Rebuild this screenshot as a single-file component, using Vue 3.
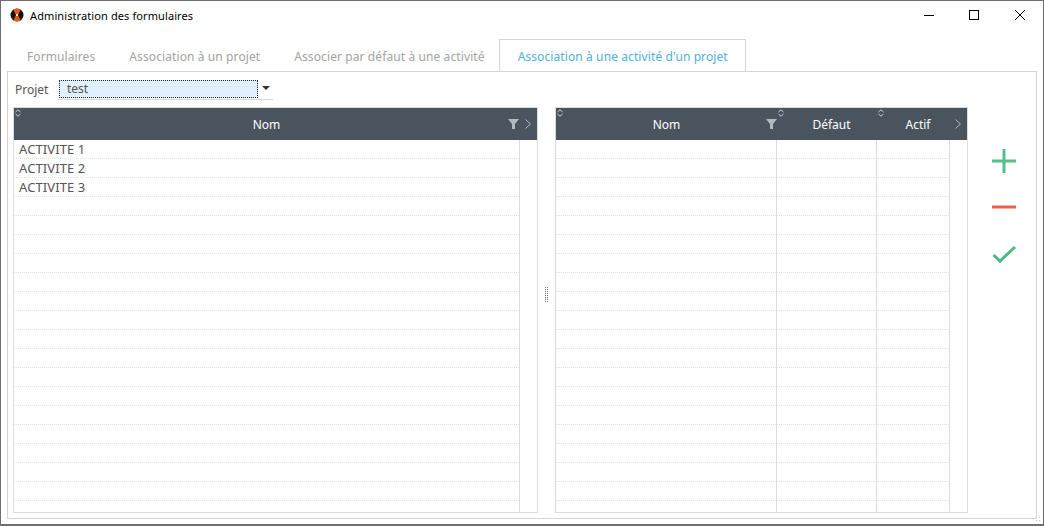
<script setup>
const tabs = [
  { label: 'Formulaires' },
  { label: 'Association à un projet' },
  { label: 'Associer par défaut à une activité' },
  { label: "Association à une activité d'un projet", active: true },
]
const activities = ['ACTIVITE 1', 'ACTIVITE 2', 'ACTIVITE 3']
const rows = Array.from({ length: 19 }, (_, i) => i)
const grip = Array.from({ length: 16 }, (_, i) => i)
</script>

<template>
  <div class="window">
    <header class="titlebar">
      <svg class="logo" width="14" height="14" viewBox="0 0 14 14">
        <circle cx="7" cy="7" r="6.5" fill="#111" />
        <path d="M3 1h8L8 7l3 6H3l3-6z" fill="#e8590c" />
        <path d="M6 6.2h2V8H6z" fill="#fff" />
      </svg>
      <span class="title">Administration des formulaires</span>
      <div class="controls">
        <svg width="12" height="12" viewBox="0 0 12 12"><path d="M2 6.5h10" stroke="#000" fill="none" /></svg>
        <svg width="12" height="12" viewBox="0 0 12 12"><rect x="1.5" y="1.5" width="9" height="9" stroke="#000" fill="none" /></svg>
        <svg width="12" height="12" viewBox="0 0 12 12"><path d="M1 1l10 10M11 1L1 11" stroke="#000" fill="none" /></svg>
      </div>
    </header>

    <nav class="tabs">
      <div v-for="t in tabs" :key="t.label" class="tab" :class="{ active: t.active }">{{ t.label }}</div>
    </nav>

    <main class="panel">
      <div class="project">
        <span class="project-label">Projet</span>
        <div class="combo">
          <div class="combo-value">test</div>
          <span class="combo-arrow"></span>
        </div>
      </div>

      <div class="content">
        <section class="table left-table">
          <div class="thead">
            <div class="th">
              <svg class="sort" width="6" height="8" viewBox="0 0 6 8"><path d="M.5 3L3 .8 5.5 3M.5 5L3 7.2 5.5 5" stroke="#ccd2d8" fill="none" /></svg>
              <span>Nom</span>
              <svg class="filter" width="11" height="10" viewBox="0 0 11 10"><path d="M0 0h11L7 5v5H4V5z" fill="#b4b9be" /></svg>
            </div>
            <svg class="chev" width="6" height="10" viewBox="0 0 6 10"><path d="M.5.5L5.5 5 .5 9.5" stroke="#b4b9be" fill="none" /></svg>
          </div>
          <div class="tbody">
            <div class="col-main">
              <div v-for="i in rows" :key="i" class="row">{{ activities[i] }}</div>
            </div>
          </div>
        </section>

        <div class="splitter">
          <div class="grip"><i v-for="g in grip" :key="g"></i></div>
        </div>

        <section class="table right-table">
          <div class="thead">
            <div class="th c-nom">
              <svg class="sort" width="6" height="8" viewBox="0 0 6 8"><path d="M.5 3L3 .8 5.5 3M.5 5L3 7.2 5.5 5" stroke="#ccd2d8" fill="none" /></svg>
              <span>Nom</span>
              <svg class="filter" width="11" height="10" viewBox="0 0 11 10"><path d="M0 0h11L7 5v5H4V5z" fill="#b4b9be" /></svg>
            </div>
            <div class="th c-def">
              <svg class="sort" width="6" height="8" viewBox="0 0 6 8"><path d="M.5 3L3 .8 5.5 3M.5 5L3 7.2 5.5 5" stroke="#ccd2d8" fill="none" /></svg>
              <span>Défaut</span>
            </div>
            <div class="th c-act">
              <svg class="sort" width="6" height="8" viewBox="0 0 6 8"><path d="M.5 3L3 .8 5.5 3M.5 5L3 7.2 5.5 5" stroke="#ccd2d8" fill="none" /></svg>
              <span>Actif</span>
            </div>
            <svg class="chev" width="6" height="10" viewBox="0 0 6 10"><path d="M.5.5L5.5 5 .5 9.5" stroke="#b4b9be" fill="none" /></svg>
          </div>
          <div class="tbody">
            <div class="col-cell c-nom"><div v-for="i in rows" :key="i" class="row"></div></div>
            <div class="col-cell c-def"><div v-for="i in rows" :key="i" class="row"></div></div>
            <div class="col-cell c-act"><div v-for="i in rows" :key="i" class="row"></div></div>
          </div>
        </section>

        <aside class="actions">
          <svg width="24" height="24" viewBox="0 0 24 24"><path d="M12 0v24M0 12h24" stroke="#52c08a" stroke-width="3" fill="none" /></svg>
          <svg width="24" height="4" viewBox="0 0 24 4"><path d="M0 2h24" stroke="#ee5f50" stroke-width="3" fill="none" /></svg>
          <svg width="24" height="18" viewBox="0 0 24 18"><path d="M1.5 10l6.5 6L23 2" stroke="#4cb886" stroke-width="3" fill="none" /></svg>
        </aside>
      </div>
    </main>

    <div class="resize"></div>
  </div>
</template>

<style>
html, body { margin: 0; background: #fff; }
</style>

<style scoped>
.window {
  position: relative;
  box-sizing: border-box;
  width: 1044px;
  height: 526px;
  border: 1px solid #6f6f6f;
  border-bottom-width: 2px;
  background: #fff;
  display: flex;
  flex-direction: column;
  font-family: "Noto Sans", sans-serif;
  font-size: 12px;
  color: #555;
  overflow: hidden;
}
.titlebar {
  height: 38px;
  flex: none;
  display: flex;
  align-items: center;
  padding-left: 9px;
  padding-bottom: 10px;
  box-sizing: border-box;
}
.logo { margin-right: 6px; }
.title { color: #000; font-size: 11px; letter-spacing: 0.1px; }
.controls {
  margin-left: auto;
  display: flex;
  gap: 34px;
  padding-right: 17px;
}
.tabs {
  display: flex;
  height: 32px;
  flex: none;
  padding-left: 9px;
}
.tab {
  padding: 0 17px;
  line-height: 36px;
  color: #a3a3a3;
  white-space: nowrap;
  letter-spacing: 0.1px;
}
.tab.active {
  color: #4fb0e0;
  line-height: 34px;
  border: 1px solid #d4d4d4;
  border-bottom: 0;
  height: 32px;
  box-sizing: border-box;
  padding: 0 17px 0 18px;
  margin-left: -3px;
}
.panel {
  margin: 0 6px 5px 6px;
  flex: 1;
  min-height: 0;
  border: 1px solid #d4d4d4;
  padding: 8px 0 5px 5px;
  display: flex;
  flex-direction: column;
}
.project {
  display: flex;
  height: 27px;
  flex: none;
  padding-left: 2px;
}
.project-label { width: 43px; line-height: 20px; }
.combo {
  width: 215px;
  height: 19px;
  border-bottom: 1px solid #d8d8d8;
  position: relative;
}
.combo-value {
  box-sizing: border-box;
  width: 199px;
  height: 18px;
  margin-left: 1px;
  background: #e0f0fe;
  border: 1px dotted #222;
  padding-left: 7px;
  line-height: 15px;
}
.combo-arrow {
  position: absolute;
  left: 204px;
  top: 6px;
  border: 4px solid transparent;
  border-top-color: #333;
  border-bottom: 0;
}
.content {
  display: flex;
  flex: 1;
  min-height: 0;
}
.table {
  box-sizing: border-box;
  border: 1px solid #dcdcdc;
  display: flex;
  flex-direction: column;
  flex: none;
}
.left-table { width: 525px; }
.right-table { width: 413px; }
.thead {
  height: 32px;
  flex: none;
  background: #4a545e;
  color: #fff;
  display: flex;
  position: relative;
}
.th {
  position: relative;
  display: flex;
  align-items: center;
  justify-content: center;
  flex: 1;
}
.sort { position: absolute; left: 1px; top: 1px; }
.filter { position: absolute; right: 0; top: 11px; }
.chev { position: absolute; right: 6px; top: 11px; }
.left-table .th { flex: none; width: 505px; }
.tbody {
  flex: 1;
  display: flex;
  min-height: 0;
}
.col-main {
  width: 505px;
  border-right: 1px solid #dcdcdc;
}
.row {
  box-sizing: border-box;
  height: 19px;
  border-bottom: 1px dotted #e2e2e2;
  padding-left: 5px;
  line-height: 18px;
  font-size: 13px;
  letter-spacing: 0.1px;
}
.th.c-nom, .col-cell.c-nom { flex: none; width: 221px; }
.th.c-def, .col-cell.c-def { flex: none; width: 100px; padding-left: 9px; box-sizing: border-box; }
.th.c-act, .col-cell.c-act { flex: none; width: 73px; padding-left: 9px; box-sizing: border-box; }
.col-cell { box-sizing: border-box; border-right: 1px solid #dcdcdc; }
.col-cell.c-def, .col-cell.c-act { padding-left: 0; }
.splitter {
  width: 17px;
  display: flex;
  align-items: center;
  justify-content: center;
  flex: none;
  padding-bottom: 32px;
  box-sizing: border-box;
}
.grip {
  display: grid;
  grid-template-columns: 1px 1px;
  gap: 1px;
  grid-auto-rows: 1px;
}
.grip i { background: #777; }
.actions {
  width: 68px;
  flex: none;
  display: flex;
  flex-direction: column;
  align-items: flex-start;
  padding: 42px 0 0 24px;
  box-sizing: border-box;
}
.actions svg:nth-child(2) { margin-top: 32px; }
.actions svg:nth-child(3) { margin-top: 36px; }
.resize {
  position: absolute;
  right: 1px;
  bottom: 1px;
  width: 10px;
  height: 10px;
  background: radial-gradient(circle, #bbb 1px, transparent 1px) 0 0 / 3px 3px;
  clip-path: polygon(100% 0, 100% 100%, 0 100%);
}
</style>
